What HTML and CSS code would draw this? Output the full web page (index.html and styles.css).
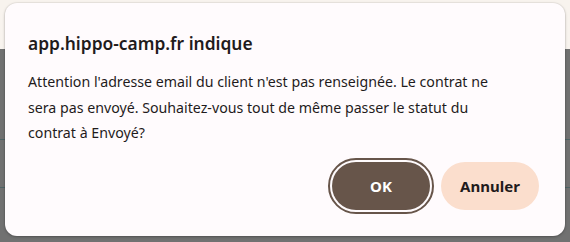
FILE: index.html
```html
<!DOCTYPE html>
<html lang="fr">
<head>
<meta charset="utf-8">
<title>app.hippo-camp.fr indique</title>
<link rel="stylesheet" href="styles.css">
</head>
<body>
<div class="page">
  <div class="toolbar"></div>
  <div class="content">
    <div class="rule"></div>
    <div class="rule"></div>
  </div>
</div>
<div class="dialog" role="alertdialog">
  <h1 class="title">app.hippo-camp.fr indique</h1>
  <p class="message">Attention l'adresse email du client n'est pas renseignée. Le contrat ne sera pas envoyé. Souhaitez-vous tout de même passer le statut du contrat à Envoyé?</p>
  <div class="actions">
    <button class="btn btn-ok">OK</button>
    <button class="btn btn-cancel">Annuler</button>
  </div>
</div>
</body>
</html>
```
FILE: styles.css
```css
html, body {
  margin: 0;
  padding: 0;
  height: 100%;
}
body {
  font-family: "Noto Sans", "Open Sans", sans-serif;
  background: #6f6f6f;
  position: relative;
  overflow: hidden;
}
.page {
  display: flex;
  flex-direction: column;
  height: 100%;
}
.toolbar {
  height: 49px;
  background: #f8f3ee;
}
.content {
  flex: 1;
  background: #717171;
  display: flex;
  flex-direction: column;
  padding-top: 90px;
  gap: 47px;
}
.rule {
  height: 1px;
  background: #4f6466;
}
.dialog {
  position: absolute;
  left: 5px;
  top: 3px;
  width: 560px;
  height: 233px;
  box-sizing: border-box;
  background: #fffbfd;
  border-radius: 12px;
  box-shadow: 0 1px 3px rgba(0,0,0,0.25), 0 0 0 1px rgba(0,0,0,0.04);
  padding: 27px 26px 26px 23px;
  display: flex;
  flex-direction: column;
  color: #1f1b1c;
}
.title {
  margin: 0;
  font-size: 17.4px;
  font-weight: 600;
  line-height: 26px;
}
.message {
  margin: 13px 0 0 0;
  font-size: 14.2px;
  line-height: 25.5px;
  width: 462px;
}
.actions {
  margin-top: auto;
  display: flex;
  justify-content: flex-end;
  gap: 11px;
}
.btn {
  font-family: inherit;
  font-size: 15px;
  font-weight: 700;
  width: 98px;
  height: 48px;
  border: none;
  border-radius: 24px;
  cursor: pointer;
}
.btn-ok {
  background: #67554a;
  color: #ffffff;
  outline: 2px solid #67554a;
  outline-offset: 2px;
}
.btn-cancel {
  background: #fbdecd;
  color: #1f1b1c;
}
```
